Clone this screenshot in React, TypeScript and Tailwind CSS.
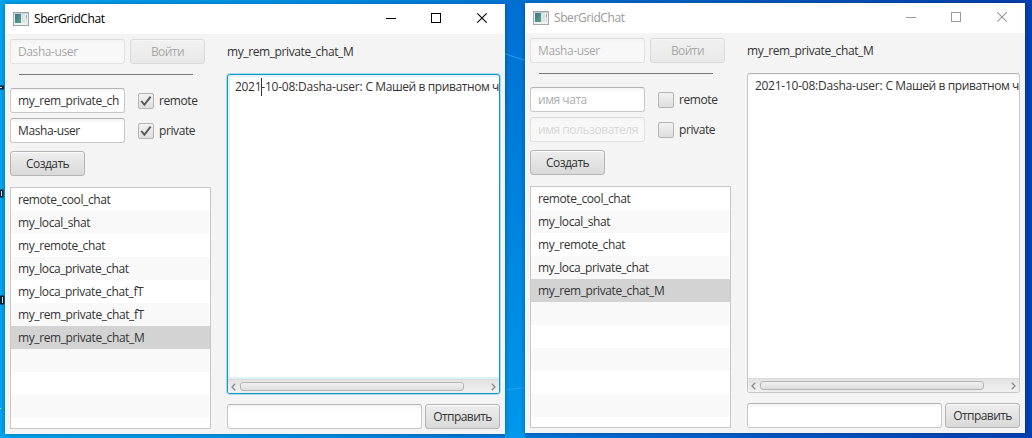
import React from "react";

type Chat = {
  active: boolean;
  user: string;
  chatName: string;
  member: string;
  memberDisabled: boolean;
  checked: boolean;
  chats: string[];
  selected: number;
};

const left: Chat = {
  active: true,
  user: "Dasha-user",
  chatName: "my_rem_private_ch",
  member: "Masha-user",
  memberDisabled: false,
  checked: true,
  chats: [
    "remote_cool_chat",
    "my_local_shat",
    "my_remote_chat",
    "my_loca_private_chat",
    "my_loca_private_chat_fT",
    "my_rem_private_chat_fT",
    "my_rem_private_chat_M",
  ],
  selected: 6,
};

const right: Chat = {
  active: false,
  user: "Masha-user",
  chatName: "",
  member: "",
  memberDisabled: true,
  checked: false,
  chats: ["remote_cool_chat", "my_local_shat", "my_remote_chat", "my_loca_private_chat", "my_rem_private_chat_M"],
  selected: 4,
};

const ROWS = Array.from({ length: 11 }, (_, i) => i);

function Wallpaper() {
  return (
    <svg className="absolute inset-0" width="1032" height="438" viewBox="0 0 1032 438">
      <defs>
        <linearGradient id="wall-x" x1="0" y1="0" x2="1" y2="0">
          <stop offset="0" stopColor="#00a4ee" />
          <stop offset="0.3" stopColor="#0090e6" />
          <stop offset="0.5" stopColor="#0076d8" />
          <stop offset="0.75" stopColor="#0058c4" />
          <stop offset="1" stopColor="#0440b4" />
        </linearGradient>
        <linearGradient id="wall-y" x1="0" y1="0" x2="0" y2="1">
          <stop offset="0" stopColor="#006fd2" />
          <stop offset="0.5" stopColor="#0084e0" />
          <stop offset="1" stopColor="#0098ec" />
        </linearGradient>
      </defs>
      <rect width="1032" height="438" fill="url(#wall-x)" />
      <rect x="505" width="20" height="438" fill="url(#wall-y)" />
      <path d="M504 53.5L526 60.5" stroke="#1a9cf0" strokeWidth="1.2" />
      <path d="M504 390L526 387.5" stroke="#16a2f2" strokeWidth="1.2" />
      <path d="M0 85.5h4v4h-4zM0 189.5h3.5v8h-3.5zM0 295.5h4.5v9h-4.5z" fill="#0a2438" />
      <path d="M0 87.5h2M1.5 191v5M2.5 297v6M0 408.5h1" stroke="#d8e4ea" />
    </svg>
  );
}

function AppIcon() {
  return (
    <svg width="16" height="14" viewBox="0 0 16 14" shapeRendering="crispEdges">
      <defs>
        <linearGradient id="app-screen" x1="0" y1="0" x2="1" y2="1">
          <stop offset="0" stopColor="#456a9c" />
          <stop offset="1" stopColor="#4fae74" />
        </linearGradient>
      </defs>
      <rect x="0.5" y="0.5" width="15" height="12.5" fill="#eef1f2" stroke="#a0a7ac" />
      <rect x="1" y="1" width="14" height="1" fill="#c6cdd2" />
      <rect x="2" y="2" width="6" height="9" fill="url(#app-screen)" />
      <rect x="8" y="2" width="4" height="9" fill="#dfe3e5" />
      <rect x="13" y="3" width="1" height="3" fill="#7fb09c" />
      <rect x="13" y="6" width="1" height="5" fill="#d3dadd" />
    </svg>
  );
}

function TitleBar({ active }: { active: boolean }) {
  return (
    <div className={`flex h-[30px] shrink-0 items-center bg-white pr-1 pl-2 ${active ? "text-black" : "text-[#999999]"}`}>
      <AppIcon />
      <span className="ml-[5px] flex-1 text-[12px] leading-4">SberGridChat</span>
      <svg width="46" height="30" viewBox="0 0 46 30" stroke="currentColor" fill="none" shapeRendering="crispEdges">
        <path d="M23 14.5H33" />
      </svg>
      <svg width="46" height="30" viewBox="0 0 46 30" stroke="currentColor" fill="none" shapeRendering="crispEdges">
        <rect x="22.5" y="9.5" width="9" height="9" />
      </svg>
      <svg width="46" height="30" viewBox="0 0 46 30" stroke="currentColor" fill="none">
        <path d="M22.3 9.3L31.7 18.7M31.7 9.3L22.3 18.7" strokeWidth="1.1" />
      </svg>
    </div>
  );
}

function Field({ text, prompt, disabled, className }: { text?: string; prompt?: string; disabled?: boolean; className: string }) {
  return (
    <div
      className={`flex h-[25px] items-center overflow-hidden rounded-[3px] border border-[#c8c8c8] border-t-[#b4b4b4] bg-white bg-linear-to-b from-[#f4f4f4] to-white to-20% pl-[7px] whitespace-nowrap ${disabled ? "opacity-40" : ""} ${className}`}
    >
      {text ? <span>{text}</span> : <span className="tracking-[-0.46px] text-[#adadad]">{prompt}</span>}
    </div>
  );
}

function Button({ children, disabled }: { children: string; disabled?: boolean }) {
  return (
    <div
      className={`flex h-[25px] w-[75px] shrink-0 items-center justify-center rounded-[3px] border border-[#b5b5b5] bg-linear-to-b from-[#eeeeee] to-[#d9d9d9] tracking-[-0.55px] whitespace-nowrap shadow-[inset_0_1px_0_#fbfbfb] ${disabled ? "opacity-40" : ""}`}
    >
      {children}
    </div>
  );
}

function Check({ label, checked }: { label: string; checked: boolean }) {
  return (
    <div className="flex items-center gap-[5px]">
      <div className="flex size-4 items-center justify-center rounded-[2px] border border-[#b5b5b5] bg-linear-to-b from-[#f2f2f2] to-[#dedede]">
        {checked && (
          <svg width="12" height="12" viewBox="0 0 12 12" fill="none" stroke="#555555" strokeWidth="1.9">
            <path d="M1.3 6L4.4 9.8L10.6 1.6" />
          </svg>
        )}
      </div>
      <span>{label}</span>
    </div>
  );
}

function ChatList({ chats, selected }: { chats: string[]; selected: number }) {
  return (
    <div className="mt-[11px] h-[242px] w-[201px] overflow-hidden border border-[#c8c8c8] bg-white">
      {ROWS.map((i) => (
        <div
          key={i}
          className={`flex h-[23px] items-center pt-px pl-[7px] ${i === selected ? "bg-[#d3d3d3]" : i % 2 ? "bg-[#f9f9f9]" : "bg-white"}`}
        >
          {chats[i] ?? ""}
        </div>
      ))}
    </div>
  );
}

function Messages({ active }: { active: boolean }) {
  return (
    <div
      className={`flex h-[320px] w-[273px] flex-col overflow-hidden rounded-[3px] border bg-white ${active ? "border-[#1299c2] shadow-[0_0_0_1px_#a9dcea,inset_2px_2px_0_#e2f3f9]" : "border-[#c8c8c8] border-t-[#b4b4b4] shadow-[inset_0_1px_0_#f4f4f4]"}`}
    >
      <div className="flex flex-1 items-start pt-1 pl-[7px] whitespace-nowrap">
        <span className="tracking-[-0.3px]">2021</span>
        {active && <span className="-mx-[0.5px] -mt-px h-[18px] w-px shrink-0 bg-[#333333]" />}
        <span className="tracking-[-0.22px]">-10-08:Dasha-user:</span>
        <span className="ml-[3px] tracking-[-0.4px]">С Машей в приватном ч</span>
      </div>
      <div
        className={`flex h-[14px] shrink-0 items-center border-t border-[#dadada] bg-linear-to-b from-[#e4e4e4] to-[#f0f0f0] px-[3px] ${active ? "shadow-[0_-2px_0_#dff2f8]" : ""}`}
      >
        <svg width="5" height="8" viewBox="0 0 5 8" fill="none" stroke="#8a8a8a" strokeWidth="1.3">
          <path d="M4.2 0.7L1 4L4.2 7.3" />
        </svg>
        <div className="ml-1 h-[9px] w-[224px] rounded-[3px] border border-[#b5b5b5] bg-linear-to-b from-[#f2f2f2] to-[#dddddd]" />
        <svg className="ml-auto" width="5" height="8" viewBox="0 0 5 8" fill="none" stroke="#8a8a8a" strokeWidth="1.3">
          <path d="M0.8 0.7L4 4L0.8 7.3" />
        </svg>
      </div>
    </div>
  );
}

function Window(c: Chat) {
  return (
    <div className="flex h-[430px] w-[500px] shrink-0 flex-col bg-[#f4f4f4] text-[12px] leading-4 tracking-[-0.4px] text-[#333333] shadow-[0_0_5px_rgba(0,0,0,0.3)]">
      <TitleBar active={c.active} />
      <div className="flex flex-1 pt-[5px] pl-[5px]">
        <div className="flex w-[201px] flex-col">
          <div className="flex gap-[5px]">
            <Field text={c.user} disabled className="w-[115px]" />
            <Button disabled>Войти</Button>
          </div>
          <div className="mt-[10px] ml-[9px] h-px w-[174px] bg-[#777777]" />
          <div className="mt-[13px] flex gap-[13px]">
            <Field text={c.chatName} prompt="имя чата" className="w-[115px]" />
            <Check label="remote" checked={c.checked} />
          </div>
          <div className="mt-[5px] flex gap-[13px]">
            <Field text={c.member} prompt="имя пользователя" disabled={c.memberDisabled} className="w-[115px]" />
            <Check label="private" checked={c.checked} />
          </div>
          <div className="mt-2 flex">
            <Button>Создать</Button>
          </div>
          <ChatList chats={c.chats} selected={c.selected} />
        </div>
        <div className="ml-4 flex w-[273px] flex-col">
          <div className="mt-[5px] mb-[14px] h-4">my_rem_private_chat_M</div>
          <Messages active={c.active} />
          <div className="mt-[10px] flex gap-[3px]">
            <Field className="w-[195px]" />
            <Button>Отправить</Button>
          </div>
        </div>
      </div>
    </div>
  );
}

export default function App() {
  return (
    <div className="relative h-[438px] w-[1032px] overflow-hidden font-['Open_Sans','Noto_Sans',sans-serif]">
      <Wallpaper />
      <div className="relative flex items-start gap-5 pl-[5px]">
        <div className="pt-1">
          <Window {...left} />
        </div>
        <div className="pt-[3px]">
          <Window {...right} />
        </div>
      </div>
    </div>
  );
}
